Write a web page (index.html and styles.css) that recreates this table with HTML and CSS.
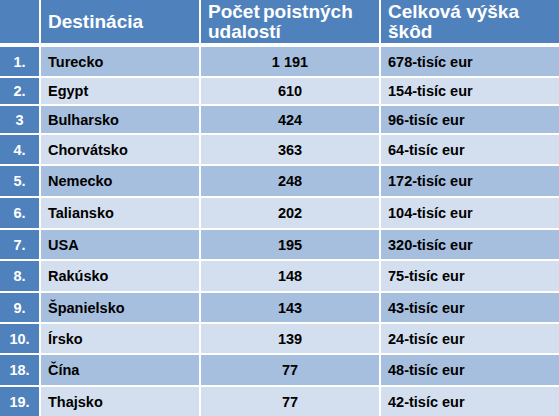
FILE: index.html
```html
<!DOCTYPE html>
<html lang="sk">
<head>
<meta charset="utf-8">
<title>Destinácie</title>
<link rel="stylesheet" href="styles.css">
</head>
<body>
<div class="tbl">
  <div class="hd"></div>
  <div class="hd txt">Destinácia</div>
  <div class="hd txt tight">Počet poistných<br>udalostí</div>
  <div class="hd txt">Celková výška<br>škôd</div>

  <div class="num">1.</div><div class="c odd">Turecko</div><div class="c odd mid">1 191</div><div class="c odd">678-tisíc eur</div>
  <div class="num">2.</div><div class="c even">Egypt</div><div class="c even mid">610</div><div class="c even">154-tisíc eur</div>
  <div class="num">3</div><div class="c odd">Bulharsko</div><div class="c odd mid">424</div><div class="c odd">96-tisíc eur</div>
  <div class="num">4.</div><div class="c even">Chorvátsko</div><div class="c even mid">363</div><div class="c even">64-tisíc eur</div>
  <div class="num">5.</div><div class="c odd">Nemecko</div><div class="c odd mid">248</div><div class="c odd">172-tisíc eur</div>
  <div class="num">6.</div><div class="c even">Taliansko</div><div class="c even mid">202</div><div class="c even">104-tisíc eur</div>
  <div class="num">7.</div><div class="c odd">USA</div><div class="c odd mid">195</div><div class="c odd">320-tisíc eur</div>
  <div class="num">8.</div><div class="c even">Rakúsko</div><div class="c even mid">148</div><div class="c even">75-tisíc eur</div>
  <div class="num">9.</div><div class="c odd">Španielsko</div><div class="c odd mid">143</div><div class="c odd">43-tisíc eur</div>
  <div class="num">10.</div><div class="c even">Írsko</div><div class="c even mid">139</div><div class="c even">24-tisíc eur</div>
  <div class="num">18.</div><div class="c odd">Čína</div><div class="c odd mid">77</div><div class="c odd">48-tisíc eur</div>
  <div class="num">19.</div><div class="c even">Thajsko</div><div class="c even mid">77</div><div class="c even">42-tisíc eur</div>
</div>
</body>
</html>
```
FILE: styles.css
```css
html, body {
  margin: 0;
  padding: 0;
  background: #ffffff;
}
body {
  width: 559px;
  height: 416px;
  overflow: hidden;
  font-family: "Liberation Sans", Arial, sans-serif;
  font-weight: bold;
}
.tbl {
  display: grid;
  grid-template-columns: 39px 158px 178px 178px;
  grid-template-rows: 45px 29px 26px 27px 29px 30px 30px 29px 30px 29px 29px 30px 30px;
  gap: 2px;
}
.hd {
  height: 43px;
  align-self: start;
  background: #4f81bd;
  color: #ffffff;
  font-size: 19px;
  line-height: 20px;
  display: flex;
  align-items: center;
  padding-left: 7px;
  box-sizing: border-box;
}
.tight {
  word-spacing: -2px;
}
.num {
  background: #4f81bd;
  color: #ffffff;
  font-size: 14.5px;
  display: flex;
  align-items: center;
  justify-content: center;
}
.c {
  color: #000000;
  font-size: 14.5px;
  display: flex;
  align-items: center;
  padding-left: 7px;
}
.mid {
  justify-content: center;
  padding-left: 0;
}
.odd {
  background: #a7bfde;
}
.even {
  background: #d3dfee;
}
```
